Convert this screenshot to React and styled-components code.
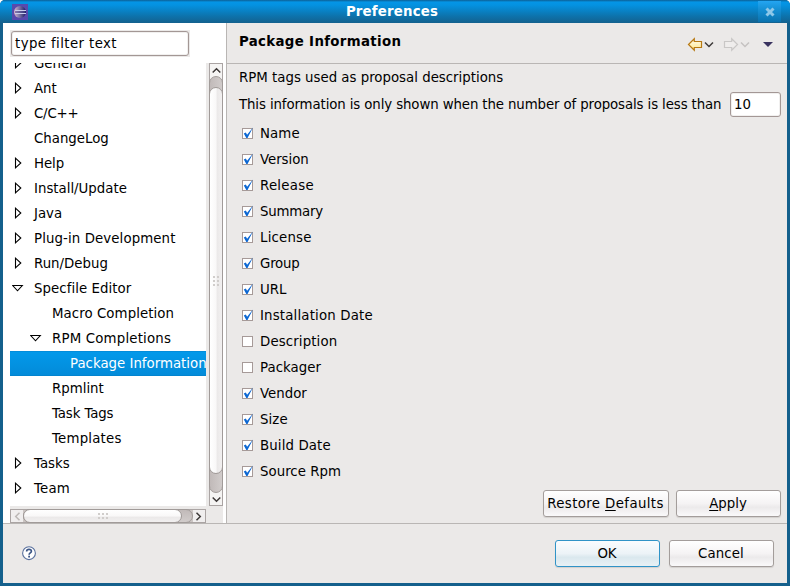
import React from 'react';
import styled, { createGlobalStyle } from 'styled-components';

const GlobalStyle = createGlobalStyle`
  * { box-sizing: border-box; }
  body { margin: 0; background: #fff; overflow: hidden; }
`;

const Dialog = styled.div`
  width: 790px;
  height: 586px;
  display: flex;
  flex-direction: column;
  background: #14608c;
  border-radius: 5px 5px 0 0;
  overflow: hidden;
  color: #000;
  font: 13.33px/18px 'DejaVu Sans', sans-serif;
  white-space: nowrap;
`;

const TitleBar = styled.header`
  height: 23px;
  flex: none;
  display: grid;
  grid-template-columns: 28px 1fr 28px;
  align-items: center;
  padding: 0 4px 0 0;
  background: linear-gradient(#0b6299 0, #0a77b8 1px, #0495e6 2px, #0492e1 5px, #0d73ac 16px, #14618e 23px);
`;

const AppIcon = styled.svg`
  width: 16px;
  height: 16px;
  margin-left: 12px;
  display: block;
`;

const Title = styled.h1`
  margin: 0;
  padding-right: 2px;
  font-size: 13.33px;
  line-height: 22px;
  font-weight: bold;
  letter-spacing: 0.18px;
  color: #fff;
  text-align: center;
`;

const CloseButton = styled.button`
  width: 23px;
  height: 21px;
  padding: 0;
  margin: 1px 0;
  border: 0;
  background: linear-gradient(#24a5f2, #1590d5 40%, #0a72ae);
  display: flex;
  align-items: center;
  justify-content: center;
`;

const Body = styled.main`
  flex: 1;
  margin: 0 3px 3px;
  background: #ebe9e8;
  display: flex;
  flex-direction: column;
`;

const Panes = styled.div`
  height: 500px;
  display: flex;
`;

const Sidebar = styled.nav`
  width: 223px;
  flex: none;
  background: #fff;
  padding: 7px 0 0 7px;
`;

const Input = styled.input`
  display: block;
  width: ${p => p.$width}px;
  height: 25px;
  padding: 0 3px 1px;
  border: 1px solid #a39795;
  border-radius: 3px;
  background: #fff;
  color: #000;
  font: inherit;
  letter-spacing: ${p => p.$tracking || 0}px;
  box-shadow: inset 0 0 0 1px #f1f0ef;
  outline: none;
`;

const FilterBox = styled.div`
  width: 180px;
  height: 27px;
  padding: 0 1px;
  background: #ebe9e8;
  display: flex;
  align-items: center;
`;

const TreeArea = styled.div`
  margin-top: 6px;
  width: 213px;
  height: 460px;
  display: grid;
  grid-template-columns: 196px 14px;
  grid-template-rows: 443px 14px;
  gap: 3px;
  background: #ebe9e8;
`;

const TreeView = styled.div`
  background: #fff;
  overflow: hidden;
`;

const TreeList = styled.div`
  margin-top: -12px;
`;

const TreeRow = styled.div`
  height: 25px;
  display: flex;
  align-items: center;
  padding-left: ${p => 2 + p.$level * 18}px;
  line-height: 25px;
  letter-spacing: ${p => p.$tracking || 0}px;
  ${p => p.$selected && `
    color: #fff;
    background: linear-gradient(#0380cb 0, #0399ea 1px, #038bd9 24px, #037dc5 25px);
  `}
`;

const Twisty = styled.svg`
  width: 12px;
  height: 12px;
  flex: none;
  margin: 0 10px 1px 0;
  fill: none;
  stroke: #000;
  stroke-width: 1.1;
`;

const VScroll = styled.div`
  border: 1px solid #aaa4a3;
  display: flex;
  flex-direction: column;
  background: #cbc5c3;
`;

const HScroll = styled.div`
  border: 1px solid #aaa4a3;
  display: flex;
  background: #cbc5c3;
`;

const VArrow = styled.div`
  height: ${p => p.$size}px;
  background: #f5f4f3;
  display: flex;
  align-items: center;
  justify-content: center;
`;

const HArrow = styled.div`
  width: ${p => p.$size}px;
  background: #f0eeee;
  display: flex;
  align-items: center;
  justify-content: center;
`;

const VTrack = styled.div`
  flex: 1;
  background: #f5f4f3;
  display: flex;
`;

const VTrough = styled.div`
  flex: 1;
  margin: 0 -1px;
  border: 1px solid #a19b99;
  border-radius: 7px;
  background: linear-gradient(90deg, #c1bab9, #d1cccb);
  padding-top: 10px;
`;

const VThumb = styled.div`
  height: 387px;
  margin: 0 -1px;
  border: 1px solid #a19b99;
  border-radius: 7px;
  background: linear-gradient(90deg, #fff, #f9f8f8 50%, #ebe9e9 60%, #f2f0f0);
  display: flex;
  align-items: center;
  justify-content: center;
`;

const HTrough = styled.div`
  flex: 1;
  margin: -1px 0;
  border: 1px solid #a19b99;
  border-radius: 7px;
  background: linear-gradient(#c1bab9, #d1cccb);
`;

const HThumb = styled.div`
  width: 159px;
  height: 14px;
  margin: -1px;
  border: 1px solid #a19b99;
  border-radius: 7px;
  background: linear-gradient(#fff, #f9f8f8 50%, #ebe9e9 60%, #f2f0f0);
  display: flex;
  align-items: center;
  justify-content: center;
`;

const Icon = styled.svg`
  display: block;
  flex: none;
  overflow: visible;
`;

const Page = styled.section`
  flex: 1;
  border-left: 1px solid #b9b6b4;
  display: flex;
  flex-direction: column;
`;

const PageHeader = styled.div`
  height: 41px;
  flex: none;
  display: flex;
  justify-content: space-between;
  padding: 9px 14px 0 12px;
  border-bottom: 1px solid #b9b6b4;
`;

const PageTitle = styled.h2`
  margin: 1px 0 0;
  font-size: 13.33px;
  line-height: 18px;
  font-weight: bold;
  letter-spacing: 0.34px;
`;

const PageTools = styled.div`
  display: flex;
  height: 24px;
  align-items: center;
`;

const PageContent = styled.div`
  padding: 5px 6px 0 12px;
`;

const Limit = styled.label`
  display: flex;
  justify-content: space-between;
  align-items: center;
  height: 27px;
  margin-top: 4px;
  letter-spacing: -0.11px;
`;

const Options = styled.div`
  margin-top: 2px;
`;

const Option = styled.label`
  height: 26px;
  display: flex;
  align-items: center;
  padding-left: 2px;
  letter-spacing: ${p => p.$tracking}px;
`;

const OptionText = styled.span`
  padding-top: 2px;
`;

const Box = styled.svg`
  width: 13px;
  height: 13px;
  display: block;
  margin: 1px 6px 0 0;
  overflow: visible;
`;

const PageActions = styled.div`
  margin-top: auto;
  display: flex;
  justify-content: flex-end;
  gap: 7px;
  padding: 0 6px 6px 0;
`;

const Button = styled.button`
  width: ${p => p.$width}px;
  height: 27px;
  padding: 1px 1px 0 0;
  border: 1px solid ${p => (p.$primary ? '#3093c7' : '#a39d9b')};
  border-radius: 3px;
  color: #000;
  font: inherit;
  letter-spacing: ${p => p.$tracking || 0}px;
  background: ${p => (p.$primary
    ? 'linear-gradient(#fafcfe, #ecf3f7 50%, #dae8ee 65%, #e8f1f5)'
    : 'linear-gradient(#fff, #f5f3f4 50%, #eceaeb 65%, #faf9fa)')};
  box-shadow: 0 1px 1px #d3d0ce;
  u { text-underline-offset: 2px; text-decoration-skip-ink: none; }
`;

const Footer = styled.footer`
  flex: 1;
  border-top: 1px solid #b9b6b4;
  display: flex;
  align-items: center;
  padding: 0 13px 0 18px;
`;

const FooterButtons = styled.div`
  margin-left: auto;
  display: flex;
  gap: 9px;
`;

const ToolGroup = styled.div`
  display: flex;
  align-items: center;
  gap: 2px;
  margin-right: ${p => p.$gap}px;
`;

const tree = [
  { label: 'General', level: 0, state: 'closed' },
  { label: 'Ant', level: 0, state: 'closed' },
  { label: 'C/C++', level: 0, state: 'closed', tracking: -0.2 },
  { label: 'ChangeLog', level: 0 },
  { label: 'Help', level: 0, state: 'closed', tracking: -0.1 },
  { label: 'Install/Update', level: 0, state: 'closed' },
  { label: 'Java', level: 0, state: 'closed' },
  { label: 'Plug-in Development', level: 0, state: 'closed', tracking: 0.1 },
  { label: 'Run/Debug', level: 0, state: 'closed' },
  { label: 'Specfile Editor', level: 0, state: 'open', tracking: 0.05 },
  { label: 'Macro Completion', level: 1, tracking: 0.07 },
  { label: 'RPM Completions', level: 1, state: 'open', tracking: 0.18 },
  { label: 'Package Information', level: 2, selected: true },
  { label: 'Rpmlint', level: 1 },
  { label: 'Task Tags', level: 1, tracking: -0.12 },
  { label: 'Templates', level: 1, tracking: 0.2 },
  { label: 'Tasks', level: 0, state: 'closed' },
  { label: 'Team', level: 0, state: 'closed', tracking: 0.15 },
];

const options = [
  { label: 'Name', checked: true, tracking: 0.1 },
  { label: 'Version', checked: true, tracking: -0.05 },
  { label: 'Release', checked: true, tracking: 0.25 },
  { label: 'Summary', checked: true, tracking: -0.2 },
  { label: 'License', checked: true, tracking: 0.2 },
  { label: 'Group', checked: true, tracking: -0.2 },
  { label: 'URL', checked: true, tracking: 0 },
  { label: 'Installation Date', checked: true, tracking: 0.17 },
  { label: 'Description', checked: false, tracking: 0.12 },
  { label: 'Packager', checked: false, tracking: 0.05 },
  { label: 'Vendor', checked: true, tracking: 0 },
  { label: 'Size', checked: true, tracking: 0.1 },
  { label: 'Build Date', checked: true, tracking: 0.12 },
  { label: 'Source Rpm', checked: true, tracking: 0.03 },
];

function Chevron({ d, color = '#3e3a39', size = 9 }) {
  return (
    <Icon width={size} height={size} viewBox="0 0 9 9">
      <path d={d} fill="none" stroke={color} strokeWidth="1.5" />
    </Icon>
  );
}

function Grip({ vertical }) {
  const cols = vertical ? [0, 4] : [0, 4, 8];
  const rows = vertical ? [0, 4, 8] : [0, 4];
  return (
    <Icon width={vertical ? 6 : 10} height={vertical ? 10 : 6}>
      {cols.flatMap(x => rows.map(y => (
        <rect key={`${x}-${y}`} x={x} y={y} width="2" height="2" fill="#d0cdcb" />
      )))}
    </Icon>
  );
}

function ArrowIcon({ stroke, fill, flipped }) {
  return (
    <Icon width="15" height="13" viewBox="0 0 15 13">
      <path
        d="M.5 6.5 6.3 .8V3.5H13.5V9.5H6.3V12.2Z"
        transform={flipped ? 'translate(14 0) scale(-1 1)' : undefined}
        fill={fill} stroke={stroke} strokeWidth="1.2"
      />
    </Icon>
  );
}

export default function App() {
  return (
    <>
      <GlobalStyle />
      <Dialog>
        <TitleBar>
          <AppIcon viewBox="0 0 16 16">
            <defs>
              <linearGradient id="sphere" x1="0" x2="1">
                <stop offset="0" stopColor="#e0b4c8" />
                <stop offset=".35" stopColor="#8d84b2" />
                <stop offset="1" stopColor="#1b1b63" />
              </linearGradient>
              <linearGradient id="arrowFill" x1="0" x2="0" y1="0" y2="1">
                <stop offset="0" stopColor="#fffdf0" />
                <stop offset="1" stopColor="#ffe78a" />
              </linearGradient>
            </defs>
            <rect width="16" height="16" fill="#5849ad" />
            <circle cx="8" cy="8" r="6" fill="url(#sphere)" />
            <path d="M3 6.5H14M3 9.5H14" stroke="#c9cdec" strokeWidth="1" />
            <path d="M3 8H13" stroke="#4b468d" strokeWidth="1" />
          </AppIcon>
          <Title>Preferences</Title>
          <CloseButton aria-label="Close">
            <Icon width="10" height="10" viewBox="0 0 10 10">
              <path d="M1.5 1.5 8.5 8.5M8.5 1.5 1.5 8.5" stroke="#8ec8e9" strokeWidth="3" />
            </Icon>
          </CloseButton>
        </TitleBar>
        <Body>
          <Panes>
            <Sidebar>
              <FilterBox>
                <Input $width={178} $tracking={0.4} defaultValue="type filter text" />
              </FilterBox>
              <TreeArea>
                <TreeView>
                  <TreeList>
                    {tree.map(({ label, level, state, selected, tracking }) => (
                      <TreeRow key={label} $level={level} $selected={selected} $tracking={tracking}>
                        <Twisty viewBox="0 0 12 12">
                          {state === 'closed' && <path d="M3.5 1.2V10.8L8.8 6Z" />}
                          {state === 'open' && <path d="M.7 3.5H10.3L5.5 8.8Z" />}
                        </Twisty>
                        {label}
                      </TreeRow>
                    ))}
                  </TreeList>
                </TreeView>
                <VScroll>
                  <VArrow $size={12}><Chevron d="M.7 6.5 4.5 2.7 8.3 6.5" /></VArrow>
                  <VTrack>
                    <VTrough>
                      <VThumb><Grip vertical /></VThumb>
                    </VTrough>
                  </VTrack>
                  <VArrow $size={12}><Chevron d="M.7 2.5 4.5 6.3 8.3 2.5" /></VArrow>
                </VScroll>
                <HScroll>
                  <HArrow $size={12}><Chevron d="M6.5 .7 2.7 4.5 6.5 8.3" color="#bcb8b6" /></HArrow>
                  <HTrough><HThumb><Grip /></HThumb></HTrough>
                  <HArrow $size={12}><Chevron d="M1.5 .7 5.3 4.5 1.5 8.3" /></HArrow>
                </HScroll>
              </TreeArea>
            </Sidebar>
            <Page>
              <PageHeader>
                <PageTitle>Package Information</PageTitle>
                <PageTools>
                  <ToolGroup $gap={10}>
                    <ArrowIcon stroke="#b87a14" fill="url(#arrowFill)" />
                    <Chevron d="M0 2.5 4 6.5 8 2.5" />
                  </ToolGroup>
                  <ToolGroup $gap={13}>
                    <ArrowIcon stroke="#c9c7c6" fill="#efedec" flipped />
                    <Chevron d="M0 2.5 4 6.5 8 2.5" color="#c5c2c1" />
                  </ToolGroup>
                  <Icon width="10" height="5" viewBox="0 0 10 5">
                    <path d="M0 0H10L5 5Z" fill="#39325f" />
                  </Icon>
                </PageTools>
              </PageHeader>
              <PageContent>
                <div>RPM tags used as proposal descriptions</div>
                <Limit>
                  This information is only shown when the number of proposals is less than
                  <Input $width={51} defaultValue="10" />
                </Limit>
                <Options>
                  {options.map(({ label, checked, tracking }) => (
                    <Option key={label} $tracking={tracking}>
                      <Box viewBox="0 0 13 13">
                        <rect x="1.5" y="1.5" width="10" height="10" fill="#fff" stroke="#a69a98" />
                        {checked && (
                          <path d="M2.8 6.4 4.8 5.5 6.1 7.7 12 .6 6.5 11H5.3Z" fill="#0c67d2" />
                        )}
                      </Box>
                      <OptionText>{label}</OptionText>
                    </Option>
                  ))}
                </Options>
              </PageContent>
              <PageActions>
                <Button $width={126} $tracking={0.38}>Restore <u>D</u>efaults</Button>
                <Button $width={105}><u>A</u>pply</Button>
              </PageActions>
            </Page>
          </Panes>
          <Footer>
            <Icon width="15" height="15" viewBox="0 0 15 15">
              <circle cx="8" cy="7.2" r="6.4" fill="#fff" stroke="#59709d" strokeWidth="1.1" />
              <path d="M5.6 5.5C5.6 2.6 10.4 2.6 10.4 5.3 10.4 6.9 8.1 7 8.1 8.7" fill="none" stroke="#3c5686" strokeWidth="1.7" />
              <rect x="7.2" y="9.7" width="1.8" height="1.8" fill="#3c5686" />
            </Icon>
            <FooterButtons>
              <Button $width={105} $primary>OK</Button>
              <Button $width={105} $tracking={0.1}>Cancel</Button>
            </FooterButtons>
          </Footer>
        </Body>
      </Dialog>
    </>
  );
}
